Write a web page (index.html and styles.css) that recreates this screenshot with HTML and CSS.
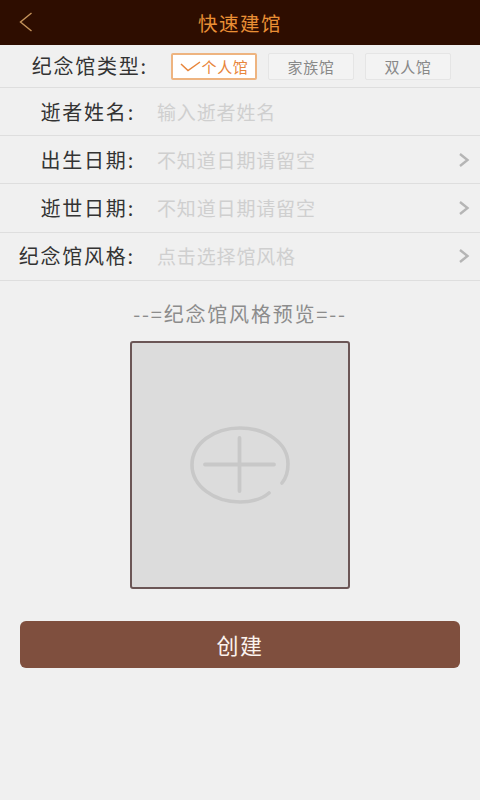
FILE: index.html
```html
<!DOCTYPE html>
<html lang="zh-CN">
<head>
<meta charset="utf-8">
<title>快速建馆</title>
<link rel="stylesheet" href="styles.css">
</head>
<body>
<div class="page">
  <header class="topbar">
    <svg class="back" width="14" height="22" viewBox="0 0 14 22"><path d="M12.500 2 L1.500 11 L12.500 20" fill="none" stroke="#c4935a" stroke-width="1.400"/></svg>
    <h1 class="title">快速建馆</h1>
  </header>
  <div class="row row-type">
    <span class="label">纪念馆类型:</span>
    <div class="chips">
      <span class="chip chip-on"><svg width="21" height="11" viewBox="0 0 21 11"><path d="M1 3 L8 9.500 L20 1" fill="none" stroke="#e8853a" stroke-width="1.500"/></svg>个人馆</span>
      <span class="chip">家族馆</span>
      <span class="chip">双人馆</span>
    </div>
  </div>
  <div class="row">
    <span class="label">逝者姓名:</span>
    <span class="hint">输入逝者姓名</span>
  </div>
  <div class="row">
    <span class="label">出生日期:</span>
    <span class="hint">不知道日期请留空</span>
    <svg class="chev" width="12" height="16" viewBox="0 0 12 16"><path d="M2 2 L9.500 8 L2 14" fill="none" stroke="#b5b5b5" stroke-width="2.400"/></svg>
  </div>
  <div class="row">
    <span class="label">逝世日期:</span>
    <span class="hint">不知道日期请留空</span>
    <svg class="chev" width="12" height="16" viewBox="0 0 12 16"><path d="M2 2 L9.500 8 L2 14" fill="none" stroke="#b5b5b5" stroke-width="2.400"/></svg>
  </div>
  <div class="row">
    <span class="label">纪念馆风格:</span>
    <span class="hint">点击选择馆风格</span>
    <svg class="chev" width="12" height="16" viewBox="0 0 12 16"><path d="M2 2 L9.500 8 L2 14" fill="none" stroke="#b5b5b5" stroke-width="2.400"/></svg>
  </div>
  <section class="preview">
    <p class="preview-title">--=纪念馆风格预览=--</p>
    <div class="preview-box">
      <svg width="100" height="78" viewBox="0 0 100 78">
        <path d="M92 57 C96 52 98 46 98 38 C98 17 76 2 50 2 C24 2 2 17 2 39 C2 60 24 76 50 76 C62 76 72 73 79 67" fill="none" stroke="#c8c8c8" stroke-width="3.600" stroke-linecap="round"/>
        <path d="M15 38.500 H84 M49.500 12 V65" fill="none" stroke="#c8c8c8" stroke-width="3.800" stroke-linecap="round"/>
      </svg>
    </div>
  </section>
  <button class="create" type="button">创建</button>
</div>
</body>
</html>
```
FILE: styles.css
```css
* { box-sizing: border-box; }
html, body { margin: 0; padding: 0; }
body {
  width: 480px;
  height: 800px;
  overflow: hidden;
  background: #f0f0f0;
  font-family: "Noto Sans CJK SC", "Liberation Sans", sans-serif;
}
.page { display: flex; flex-direction: column; height: 800px; }
.topbar {
  height: 45px;
  background: #2e0d00;
  display: flex;
  align-items: center;
  justify-content: center;
  position: relative;
}
.back { position: absolute; left: 19px; top: 11px; }
.title {
  margin: 0;
  font-size: 19.500px;
  font-weight: 400;
  letter-spacing: 1.500px;
  line-height: 45px;
  color: #e98f35;
}
.row {
  height: 48.200px;
  display: flex;
  align-items: center;
  border-bottom: 1.500px solid #dedede;
  padding-right: 10px;
}
.row-type { height: 43px; }
.label {
  width: 135px;
  flex: none;
  text-align: right;
  font-size: 20px;
  line-height: 26px;
  letter-spacing: 1.800px;
  color: #333;
  white-space: nowrap;
}
.row-type .label { width: 148px; }
.hint {
  flex: 1;
  margin-left: 22px;
  margin-bottom: 1px;
  font-size: 19px;
  letter-spacing: 0.850px;
  color: #cfcfcf;
  white-space: nowrap;
}
.chips { display: flex; gap: 11px; margin-left: 23px; }
.chip {
  width: 86px;
  height: 27px;
  display: flex;
  align-items: center;
  justify-content: center;
  border: 1px solid #e5e5e5;
  border-radius: 2px;
  background: #f3f3f3;
  font-size: 15px;
  letter-spacing: 0.600px;
  color: #888;
}
.chip-on {
  border: 2px solid #eeb480;
  background: #fff;
  color: #e8853a;
}
.chip-on svg { margin-right: 1px; }
.preview { display: flex; flex-direction: column; align-items: center; }
.preview-title {
  margin: 20px 0 15px;
  height: 25px;
  line-height: 25px;
  font-size: 20px;
  letter-spacing: 1.800px;
  color: #8c8c8c;
}
.preview-box {
  width: 220px;
  height: 248px;
  background: #dcdcdc;
  border: 2px solid #6b5656;
  border-radius: 3px;
  display: flex;
  align-items: center;
  justify-content: center;
}
.create {
  margin: 32px 20px 0;
  height: 47px;
  border: 0;
  border-radius: 6px;
  background: #7f4f3e;
  color: #fbf3ee;
  font-family: inherit;
  font-size: 22px;
  letter-spacing: 1.500px;
}
```
